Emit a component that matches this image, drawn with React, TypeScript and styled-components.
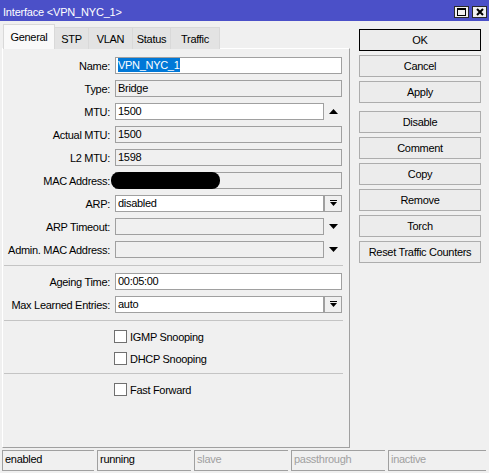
import React, { FC } from 'react';
import styled, { createGlobalStyle, css } from 'styled-components';

const GlobalStyle = createGlobalStyle`
  html, body {
    margin: 0;
    padding: 0;
    background: #f0f0f0;
  }
`;

const Window = styled.div`
  width: 489px;
  height: 473px;
  display: flex;
  flex-direction: column;
  overflow: hidden;
  background: #f0f0f0;
  font-family: 'Liberation Sans', Arial, sans-serif;
  font-size: 11px;
  letter-spacing: -0.3px;
  color: #000;
`;

const TitleBar = styled.div`
  height: 21px;
  flex: none;
  display: flex;
  align-items: center;
  padding: 0 2px 0 3px;
  box-sizing: border-box;
  background: #4b50c8;
  color: #fff;
  font-size: 11px;
  letter-spacing: -0.2px;
`;

const Title = styled.span`
  flex: 1;
  margin-top: 2px;
`;

const TitleButtons = styled.div`
  display: flex;
  gap: 3px;
  align-self: flex-end;
  margin-bottom: 3px;
`;

const TitleButton = styled.div`
  width: 15px;
  height: 12px;
  box-sizing: border-box;
  border: 1px solid #2a2a2a;
  background: #f0f0f0;
  display: flex;
  align-items: center;
  justify-content: center;
`;

const Main = styled.div`
  flex: 1;
  display: flex;
`;

const LeftSide = styled.div`
  width: 350px;
  display: flex;
  flex-direction: column;
  padding: 3px 0 0 2px;
  box-sizing: border-box;
`;

const TabRow = styled.div`
  display: flex;
  align-items: flex-end;
  height: 25px;
  margin-bottom: -1px;
  padding-left: 1px;
  position: relative;
  z-index: 1;
`;

const Tab = styled.div<{ $active?: boolean; $width: number }>`
  width: ${(p) => p.$width}px;
  box-sizing: border-box;
  display: flex;
  align-items: center;
  justify-content: center;
  border: 1px solid #d9d9d9;
  border-bottom: none;
  ${(p) =>
    p.$active
      ? css`
          height: 25px;
          background: #f9f9f9;
          padding-bottom: 1px;
        `
      : css`
          height: 22px;
          background: #e3e3e3;
          border-left: none;
        `}
`;

const Panel = styled.div`
  flex: 1;
  box-sizing: border-box;
  border-top: 1px solid #fff;
  border-left: 1px solid #fff;
  border-right: 1px solid #a0a0a0;
  border-bottom: 1px solid #a0a0a0;
  padding: 8px 0 0 0;
  display: flex;
  flex-direction: column;
`;

const Row = styled.div`
  display: grid;
  grid-template-columns: 112px 209px 18px;
  align-items: center;
  height: 17px;
  margin-bottom: 6px;
`;

const Label = styled.div`
  text-align: right;
  white-space: nowrap;
  padding-right: 5px;
`;

const Field = styled.div<{ $editable?: boolean; $wide?: boolean }>`
  position: relative;
  height: 17px;
  box-sizing: border-box;
  border: 1px solid #a0a0a0;
  background: ${(p) => (p.$editable ? '#fff' : '#f0f0f0')};
  padding: 0 2px;
  line-height: 15px;
  white-space: nowrap;
  ${(p) =>
    p.$wide &&
    css`
      grid-column: 2 / span 2;
    `}
`;

const Selected = styled.span`
  background: #0078d7;
  color: #fff;
  padding: 1px 0;
`;

const Redaction = styled.div`
  position: absolute;
  left: -5px;
  top: -1px;
  width: 109px;
  height: 17px;
  border-radius: 8px;
  background: #000;
`;

const ArrowCell = styled.div`
  display: flex;
  align-items: center;
  justify-content: center;
  height: 17px;
`;

const DropButton = styled.div`
  height: 17px;
  box-sizing: border-box;
  border: 1px solid #a0a0a0;
  background: #f0f0f0;
  display: flex;
  align-items: center;
  justify-content: center;
`;

const Separator = styled.div`
  height: 0;
  border-top: 1px solid #c4c4c4;
  margin: 1px 6px 7px 1px;
`;

const CheckRow = styled.label`
  display: flex;
  align-items: center;
  gap: 3px;
  margin: 2px 0 7px 111px;
  height: 13px;
`;

const CheckBox = styled.span`
  width: 13px;
  height: 13px;
  box-sizing: border-box;
  border: 1px solid #707070;
  background: #fff;
`;

const ButtonColumn = styled.div`
  flex: 1;
  display: flex;
  flex-direction: column;
  padding: 8px 8px 0 9px;
  gap: 4px;
`;

const Button = styled.div<{ $default?: boolean; $spaced?: boolean }>`
  height: 22px;
  box-sizing: border-box;
  border: 1px solid ${(p) => (p.$default ? '#000' : '#adadad')};
  background: #ececec;
  display: flex;
  align-items: center;
  justify-content: center;
  ${(p) =>
    p.$spaced &&
    css`
      margin-top: 4px;
    `}
`;

const StatusBar = styled.div`
  height: 25px;
  flex: none;
  display: flex;
  gap: 3px;
  padding: 2px 3px 0 2px;
  box-sizing: border-box;
`;

const StatusCell = styled.div<{ $muted?: boolean; $width: number }>`
  width: ${(p) => p.$width}px;
  height: 21px;
  box-sizing: border-box;
  border-top: 1px solid #a0a0a0;
  border-left: 1px solid #a0a0a0;
  border-bottom: 1px solid #a0a0a0;
  padding: 2px 2px 0;
  color: ${(p) => (p.$muted ? '#a0a0a0' : '#000')};
`;

const UpArrow = () => (
  <svg width="9" height="5" viewBox="0 0 9 5">
    <polygon points="0,5 9,5 4.5,0" fill="#000" />
  </svg>
);

const DownArrow = () => (
  <svg width="9" height="5" viewBox="0 0 9 5">
    <polygon points="0,0 9,0 4.5,5" fill="#000" />
  </svg>
);

const DropIcon = () => (
  <svg width="7" height="7" viewBox="0 0 7 7">
    <rect x="0" y="0" width="7" height="1" fill="#000" />
    <polygon points="0,2 7,2 3.5,6" fill="#000" />
  </svg>
);

type FieldRowProps = {
  label: string;
  value?: React.ReactNode;
  editable?: boolean;
  arrow?: 'up' | 'down' | 'drop';
};

const FieldRow: FC<FieldRowProps> = ({ label, value, editable, arrow }) => (
  <Row>
    <Label>{label}</Label>
    <Field $editable={editable} $wide={!arrow}>
      {value}
    </Field>
    {arrow === 'up' && (
      <ArrowCell>
        <UpArrow />
      </ArrowCell>
    )}
    {arrow === 'down' && (
      <ArrowCell>
        <DownArrow />
      </ArrowCell>
    )}
    {arrow === 'drop' && (
      <DropButton>
        <DropIcon />
      </DropButton>
    )}
  </Row>
);

const tabs = [
  { name: 'General', width: 52 },
  { name: 'STP', width: 34 },
  { name: 'VLAN', width: 44 },
  { name: 'Status', width: 38 },
  { name: 'Traffic', width: 49 },
];

const buttons = ['OK', 'Cancel', 'Apply', 'Disable', 'Comment', 'Copy', 'Remove', 'Torch', 'Reset Traffic Counters'];

const status = [
  { text: 'enabled', width: 93 },
  { text: 'running', width: 95 },
  { text: 'slave', width: 95, muted: true },
  { text: 'passthrough', width: 95, muted: true },
  { text: 'inactive', width: 99, muted: true },
];

const App: FC = () => (
  <Window>
    <GlobalStyle />
    <TitleBar>
      <Title>{'Interface <VPN_NYC_1>'}</Title>
      <TitleButtons>
        <TitleButton>
          <svg width="9" height="8" viewBox="0 0 9 8">
            <rect x="0.5" y="0.5" width="8" height="7" fill="none" stroke="#000" />
            <rect x="0" y="0" width="9" height="2" fill="#000" />
          </svg>
        </TitleButton>
        <TitleButton>
          <svg width="8" height="8" viewBox="0 0 8 8">
            <path d="M1 1 L7 7 M7 1 L1 7" stroke="#000" strokeWidth="2" />
          </svg>
        </TitleButton>
      </TitleButtons>
    </TitleBar>
    <Main>
      <LeftSide>
        <TabRow>
          {tabs.map((t, i) => (
            <Tab key={t.name} $active={i === 0} $width={t.width}>
              {t.name}
            </Tab>
          ))}
        </TabRow>
        <Panel>
          <FieldRow label="Name:" editable value={<Selected>VPN_NYC_1</Selected>} />
          <FieldRow label="Type:" value="Bridge" />
          <FieldRow label="MTU:" editable value="1500" arrow="up" />
          <FieldRow label="Actual MTU:" value="1500" />
          <FieldRow label="L2 MTU:" value="1598" />
          <FieldRow label="MAC Address:" value={<Redaction />} />
          <FieldRow label="ARP:" editable value="disabled" arrow="drop" />
          <FieldRow label="ARP Timeout:" arrow="down" />
          <FieldRow label="Admin. MAC Address:" arrow="down" />
          <Separator />
          <FieldRow label="Ageing Time:" editable value="00:05:00" />
          <FieldRow label="Max Learned Entries:" editable value="auto" arrow="drop" />
          <Separator />
          <CheckRow>
            <CheckBox />
            <span>IGMP Snooping</span>
          </CheckRow>
          <CheckRow>
            <CheckBox />
            <span>DHCP Snooping</span>
          </CheckRow>
          <Separator />
          <CheckRow>
            <CheckBox />
            <span>Fast Forward</span>
          </CheckRow>
        </Panel>
      </LeftSide>
      <ButtonColumn>
        {buttons.map((b, i) => (
          <Button key={b} $default={i === 0} $spaced={b === 'Disable'}>
            {b}
          </Button>
        ))}
      </ButtonColumn>
    </Main>
    <StatusBar>
      {status.map((s) => (
        <StatusCell key={s.text} $width={s.width} $muted={s.muted}>
          {s.text}
        </StatusCell>
      ))}
    </StatusBar>
  </Window>
);

export default App;
